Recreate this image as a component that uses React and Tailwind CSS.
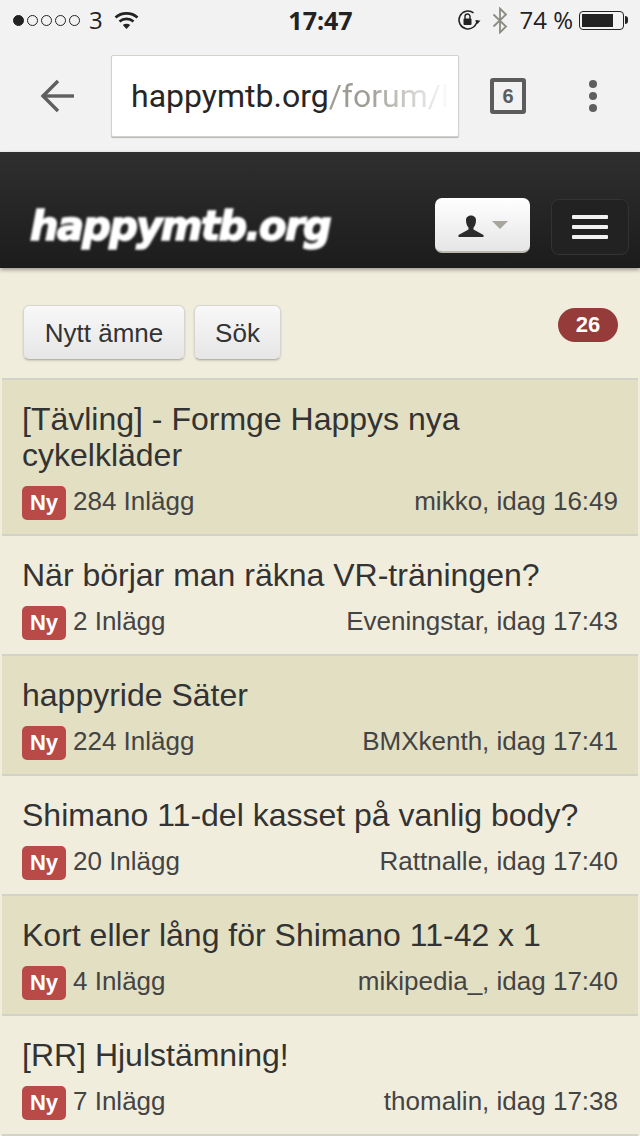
const topics = [
  { title: "[Tävling] - Formge Happys nya cykelkläder", posts: "284 Inlägg", last: "mikko, idag 16:49", shaded: true },
  { title: "När börjar man räkna VR-träningen?", posts: "2 Inlägg", last: "Eveningstar, idag 17:43" },
  { title: "happyride Säter", posts: "224 Inlägg", last: "BMXkenth, idag 17:41", shaded: true },
  { title: "Shimano 11-del kasset på vanlig body?", posts: "20 Inlägg", last: "Rattnalle, idag 17:40" },
  { title: "Kort eller lång för Shimano 11-42 x 1", posts: "4 Inlägg", last: "mikipedia_, idag 17:40", shaded: true },
  { title: "[RR] Hjulstämning!", posts: "7 Inlägg", last: "thomalin, idag 17:38" },
];

const StatusBar = () => (
  <div className="flex h-[40px] items-center justify-between pl-[13px] pr-[12px] font-['Open_Sans',sans-serif] text-[#222]">
    <div className="flex w-[230px] items-center">
      <div className="flex items-center gap-[3px]">
        <span className="h-[11px] w-[11px] rounded-full border border-[#222] bg-[#222]" />
        <span className="h-[11px] w-[11px] rounded-full border border-[#222]" />
        <span className="h-[11px] w-[11px] rounded-full border border-[#222]" />
        <span className="h-[11px] w-[11px] rounded-full border border-[#222]" />
        <span className="h-[11px] w-[11px] rounded-full border border-[#222]" />
      </div>
      <span className="ml-[9px] text-[24px] leading-none">3</span>
      <svg className="ml-[11px]" width="25" height="19" viewBox="0 0 25 19" fill="none" stroke="#222" strokeWidth="2.6">
        <path d="M1.5 6.5C7.5 1 17.5 1 23.5 6.5" />
        <path d="M5.5 10.5C9.5 7 15.5 7 19.5 10.5" />
        <path d="M12.5 18L8.8 14C11 12.3 14 12.3 16.2 14Z" fill="#222" stroke="none" />
      </svg>
    </div>
    <span className="text-[25px] leading-none font-bold">17:47</span>
    <div className="flex w-[230px] items-center justify-end">
      <svg width="24" height="22" viewBox="0 0 24 22" fill="none">
        <path d="M20 11A9 9 0 1 1 16.5 3.8" stroke="#222" strokeWidth="1.5" />
        <path d="M18 11.5h5.500L20.500 15Z" fill="#222" />
        <rect x="6.500" y="9.500" width="8" height="6.500" rx="1" fill="#222" />
        <path d="M8 10V7.500a2.500 2.500 0 0 1 5 0V10" stroke="#222" strokeWidth="1.400" />
      </svg>
      <svg className="ml-[11px]" width="16" height="27" viewBox="0 0 16 27" fill="none" stroke="#8b8b80" strokeWidth="1.800">
        <path d="M1.500 7.500L14 19.500L8 25.500V1.500L14 7.500L1.500 19.500" />
      </svg>
      <span className="ml-[11px] text-[24px] leading-none">74 %</span>
      <div className="ml-[6px] flex h-[19px] w-[45px] items-center rounded-[4px] border border-[#222] p-[2px]">
        <div className="h-full w-[31px] bg-[#222]" />
      </div>
      <div className="ml-[1px] h-[8px] w-[3px] rounded-r-full bg-[#222]" />
    </div>
  </div>
);

const BrowserBar = () => (
  <div className="flex h-[112px] items-start">
    <div className="mt-[15px] flex h-[82px] w-[111px] items-center pl-[40px]">
      <svg width="36" height="34" viewBox="0 0 36 34" fill="none" stroke="#5f5f5f" strokeWidth="3.400">
        <path d="M2.500 17H34" />
        <path d="M18 2L3 17L18 32" />
      </svg>
    </div>
    <div className="mt-[15px] flex h-[82px] w-[348px] items-center overflow-hidden rounded-[2px] border border-[#d2d2cc] bg-white pl-[19px] font-['Roboto',sans-serif] text-[32px] whitespace-nowrap shadow-[0_1px_1px_rgba(0,0,0,0.25)]">
      <span className="text-[#262626]">happymtb.org</span>
      <span className="w-[122px] overflow-hidden bg-gradient-to-r from-[#9d9b93] from-30% to-[#ffffff] bg-clip-text text-transparent">/forum/l</span>
    </div>
    <div className="mt-[15px] ml-[31px] flex h-[82px] items-center">
      <div className="flex h-[36px] w-[36px] items-center justify-center rounded-[3px] border-[4px] border-[#5c5c5c] font-['Liberation_Sans',sans-serif] text-[20px] font-bold text-[#5c5c5c]">
        6
      </div>
    </div>
    <div className="mt-[15px] ml-[63px] flex h-[82px] flex-col items-center justify-center gap-[4px]">
      <span className="h-[8px] w-[8px] rounded-full bg-[#5f5f5f]" />
      <span className="h-[8px] w-[8px] rounded-full bg-[#5f5f5f]" />
      <span className="h-[8px] w-[8px] rounded-full bg-[#5f5f5f]" />
    </div>
  </div>
);

const SiteHeader = () => (
  <div className="flex h-[116px] items-center justify-between bg-gradient-to-b from-[#2f2f2f] to-[#1c1c1c] pt-[33px] pr-[11px] pl-[30px] shadow-[0_2px_4px_rgba(0,0,0,0.35)]">
    <span className="mb-[2px] font-['DejaVu_Sans',sans-serif] text-[40px] leading-none font-bold tracking-[-1.6px] text-white italic blur-[0.8px] [-webkit-text-stroke:1.6px_white]">
      happymtb.org
    </span>
    <div className="flex items-center gap-[21px]">
      <div className="mb-[2px] flex h-[55px] w-[95px] items-center justify-center gap-[8px] rounded-[7px] border-b-2 border-[#bbb9ae] bg-gradient-to-b from-white to-[#e6e6e6]">
        <svg width="26" height="26" viewBox="0 0 26 26" fill="#2b2b2b">
          <path d="M8 8C8 2 18 2 18 8C18 11.500 17 14 15.500 15.500V17.500L25.500 23V25H.5V23L10.500 17.500V15.500C9 14 8 11.500 8 8Z" />
        </svg>
        <div className="h-0 w-0 border-x-[8px] border-t-[8px] border-x-transparent border-t-[#a8a59c]" />
      </div>
      <div className="flex h-[56px] w-[78px] flex-col items-center justify-center gap-[6px] rounded-[8px] border border-[#333] bg-[#222]">
        <span className="h-[4px] w-[36px] rounded-[1px] bg-[#f2f2f2]" />
        <span className="h-[4px] w-[36px] rounded-[1px] bg-[#f2f2f2]" />
        <span className="h-[4px] w-[36px] rounded-[1px] bg-[#f2f2f2]" />
      </div>
    </div>
  </div>
);

const Toolbar = () => (
  <div className="flex h-[110px] items-start justify-between pt-[37px] pr-[22px] pl-[23px]">
    <div className="flex gap-[9px] text-[26px] leading-none text-[#333]">
      <button className="flex h-[55px] w-[162px] items-center justify-center rounded-[6px] border border-[#d6d5cd] border-b-[#b5b4ac] bg-gradient-to-b from-[#f8f8f8] to-[#e6e6e6] shadow-[0_1px_2px_rgba(0,0,0,0.15)]">
        Nytt ämne
      </button>
      <button className="flex h-[55px] w-[87px] items-center justify-center rounded-[6px] border border-[#d6d5cd] border-b-[#b5b4ac] bg-gradient-to-b from-[#f8f8f8] to-[#e6e6e6] shadow-[0_1px_2px_rgba(0,0,0,0.15)]">
        Sök
      </button>
    </div>
    <span className="mt-[3px] flex h-[34px] w-[60px] items-center justify-center rounded-full bg-[#953b39] text-[22px] leading-none font-bold text-white">
      26
    </span>
  </div>
);

const TopicRow = ({ topic }) => (
  <div className={`mx-[2px] border-b-2 border-[#d3d2c8] pt-[21px] pr-[20px] pb-[16px] pl-[20px] ${topic.shaded ? "bg-[#e2dfc3]" : ""}`}>
    <div className="text-[32px] leading-[36px] text-[#333]">{topic.title}</div>
    <div className="mt-[11px] flex h-[34px] items-center justify-between text-[26px] leading-none text-[#444]">
      <div className="flex items-center">
        <span className="mt-[4px] flex h-[34px] w-[44px] items-center justify-center rounded-[5px] bg-[#b94a48] text-[22px] font-bold text-white">
          Ny
        </span>
        <span className="ml-[7px]">{topic.posts}</span>
      </div>
      <span>{topic.last}</span>
    </div>
  </div>
);

export default function App() {
  return (
    <div className="h-[1136px] w-[640px] overflow-hidden bg-[#f1eddd] font-['Liberation_Sans',sans-serif]">
      <div className="h-[152px] bg-[#f2f2f2]">
        <StatusBar />
        <BrowserBar />
      </div>
      <SiteHeader />
      <Toolbar />
      <div className="mx-[2px] h-[2px] bg-[#d3d2c8]" />
      {topics.map((topic) => (
        <TopicRow key={topic.title} topic={topic} />
      ))}
    </div>
  );
}
